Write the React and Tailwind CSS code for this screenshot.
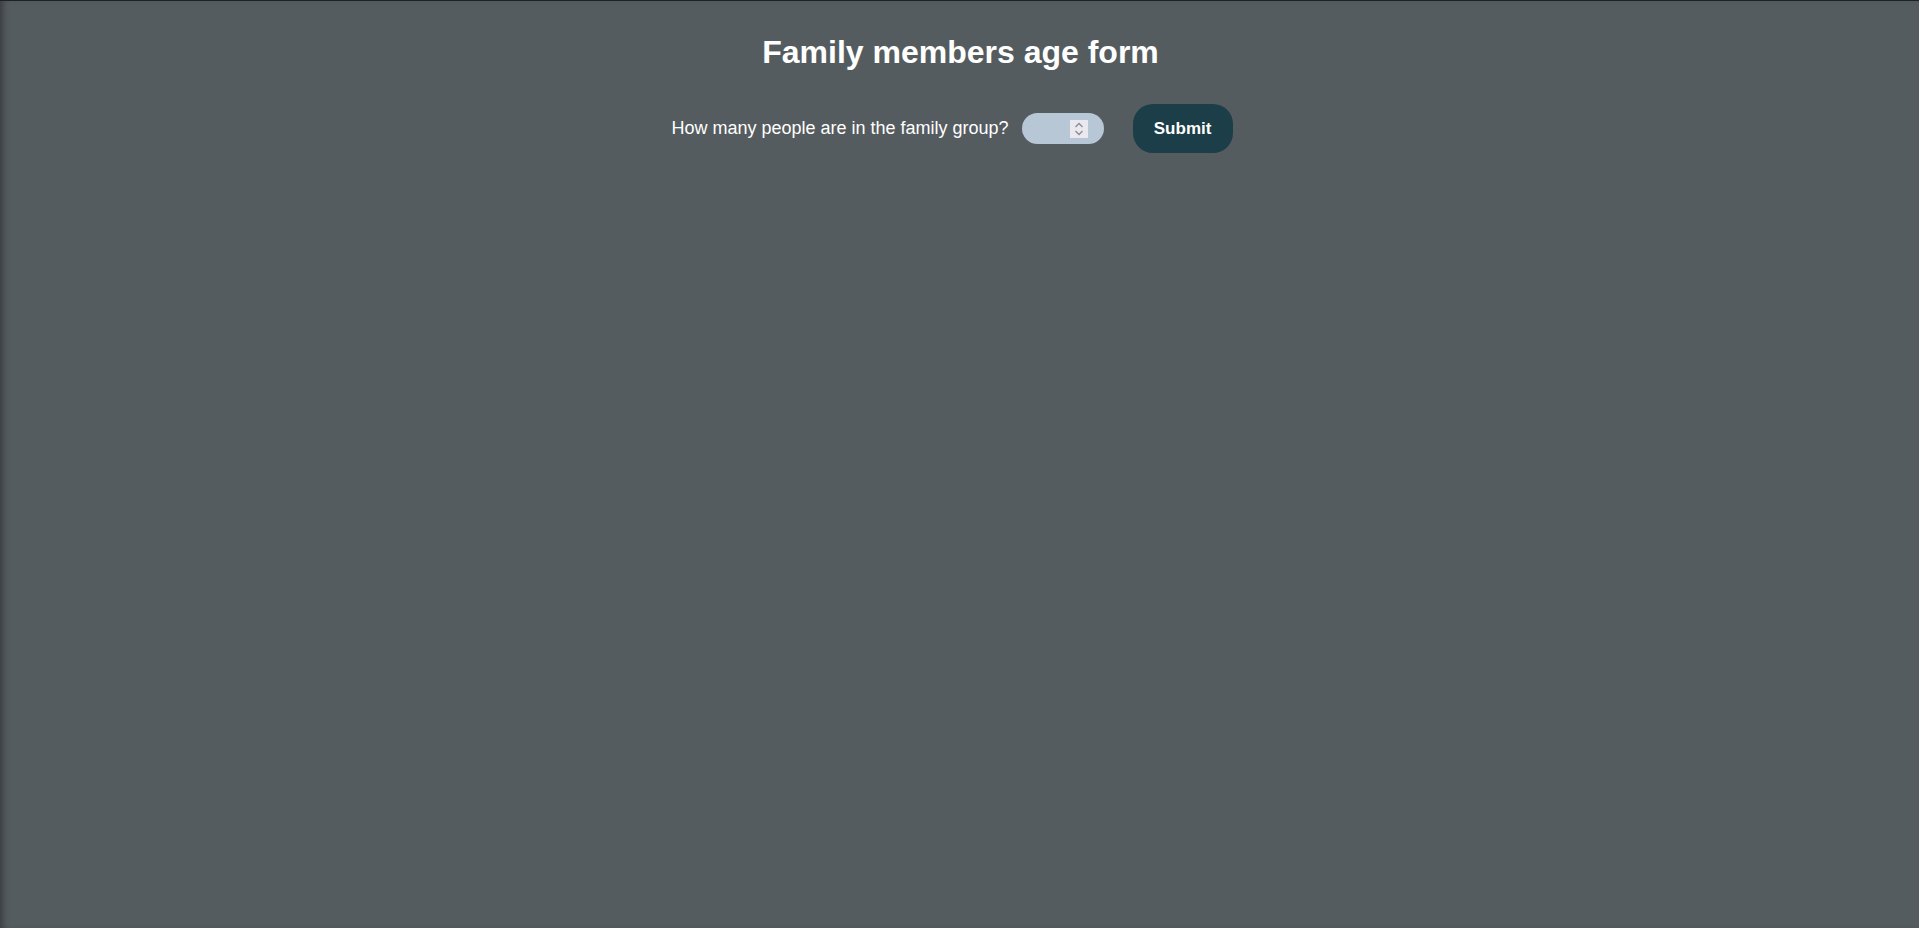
import React from "react";

export default function App() {
  return (
    <div
      className="h-[928px] w-full overflow-hidden bg-[#555c60] border-t border-[#1e2224] shadow-[inset_7px_0_7px_-4px_rgba(0,0,0,0.35)] text-white"
      style={{ fontFamily: '"Liberation Sans", Arial, sans-serif' }}
    >
      <h1 className="pt-[33px] pl-[2px] text-center text-[32px] leading-[37px] font-bold">
        Family members age form
      </h1>
      <div className="mt-[33px] flex items-center justify-center pr-[15px]">
        <label className="text-[18px] leading-[21px] text-white">
          How many people are in the family group?
        </label>
        <div className="ml-[13px] flex h-[31px] w-[82px] items-center justify-end rounded-full bg-[#b8c7d6] pr-[16px]">
          <div className="flex h-[18px] w-[18px] flex-col items-center justify-center bg-[#e9e9ef]">
            <svg width="12" height="16" viewBox="0 0 12 16" fill="none" stroke="#8c8c94" strokeWidth="1.3">
              <path d="M2.5 6 L6 2.5 L9.5 6" />
              <path d="M2.5 10 L6 13.5 L9.5 10" />
            </svg>
          </div>
        </div>
        <button className="ml-[29px] h-[49px] w-[100px] rounded-[20px] bg-[#1b3e48] text-[17px] font-bold text-white">
          Submit
        </button>
      </div>
    </div>
  );
}
